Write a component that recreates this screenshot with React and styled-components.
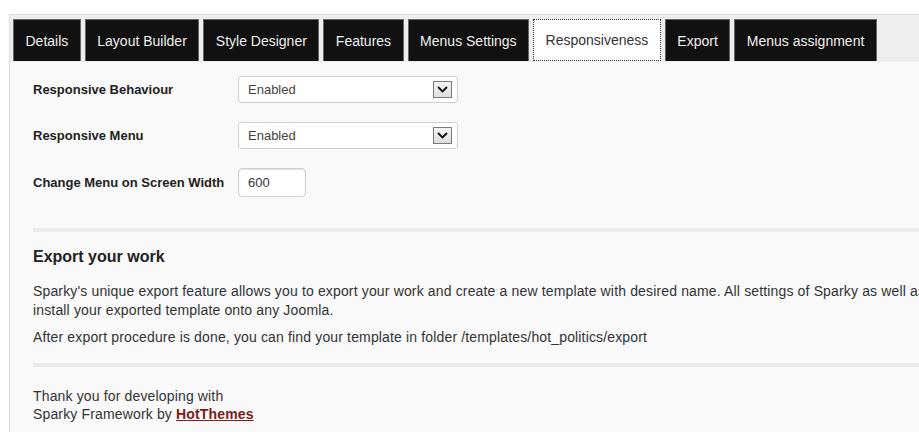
import styled, { createGlobalStyle } from "styled-components";

const GlobalStyle = createGlobalStyle`
  html, body {
    margin: 0;
    padding: 0;
    background: #fff;
    overflow: hidden;
  }
  body {
    font-family: "Liberation Sans", Arial, sans-serif;
  }
`;

const Page = styled.div`
  width: 919px;
  height: 432px;
  overflow: hidden;
  padding: 14px 0 0 9px;
  box-sizing: border-box;
`;

const Panel = styled.div`
  width: 1100px;
  height: 500px;
  border: 1px solid #dcdcdc;
  background: #f9f9f9;
`;

const TabBar = styled.div`
  display: flex;
  gap: 4px;
  padding: 4px 0 0 3px;
  background: #eeeeee;
  height: 47px;
  box-sizing: border-box;
`;

const Tab = styled.div`
  height: 42px;
  display: flex;
  align-items: center;
  padding: 0 11.5px;
  box-sizing: border-box;
  font-size: 14px;
  color: ${(p) => (p.$active ? "#333" : "#eee")};
  background: ${(p) => (p.$active ? "#fff" : "#111")};
  border: ${(p) => (p.$active ? "1px dotted #333" : "1px solid #666")};
  border-bottom: ${(p) => (p.$active ? "1px dotted #333" : "none")};
  white-space: nowrap;
  cursor: pointer;
`;

const Content = styled.div`
  padding: 14px 0 0 23px;
`;

const FormRow = styled.div`
  display: flex;
  align-items: center;
  margin-bottom: ${(p) => p.$gap || 19}px;
`;

const Label = styled.div`
  width: 205px;
  font-size: 13px;
  font-weight: bold;
  color: #222;
`;

const FakeSelect = styled.div`
  width: 220px;
  height: 27px;
  box-sizing: border-box;
  background: #fff;
  border: 1px solid #cfcfcf;
  border-radius: 3px;
  display: flex;
  align-items: center;
  justify-content: space-between;
  padding: 0 5px 0 9px;
  font-size: 13px;
  color: #444;
`;

const ArrowBox = styled.span`
  width: 19px;
  height: 17px;
  box-sizing: border-box;
  border: 1px solid #7a7a7a;
  background: linear-gradient(#f4f4f4, #dedede);
  display: flex;
  align-items: center;
  justify-content: center;
`;

const TextInput = styled.div`
  width: 68px;
  height: 29px;
  box-sizing: border-box;
  background: #fff;
  border: 1px solid #cfcfcf;
  border-radius: 4px;
  box-shadow: inset 0 1px 2px rgba(0, 0, 0, 0.12);
  display: flex;
  align-items: center;
  padding-left: 9px;
  font-size: 13px;
  color: #333;
`;

const Divider = styled.div`
  height: 4px;
  background: #ebebeb;
  margin: ${(p) => p.$margin};
`;

const Heading = styled.h3`
  margin: 0 0 15px;
  font-size: 16px;
  font-weight: bold;
  color: #222;
  line-height: 20px;
`;

const Para = styled.p`
  margin: 0 0 8px;
  font-size: 14px;
  line-height: 19px;
  letter-spacing: 0.15px;
  color: #333;
  white-space: nowrap;
`;

const Footer = styled.div`
  font-size: 14px;
  line-height: 18px;
  letter-spacing: 0.15px;
  color: #333;
`;

const BrandLink = styled.a`
  font-weight: bold;
  color: #7b1c16;
  text-decoration: underline;
`;

const tabs = [
  "Details",
  "Layout Builder",
  "Style Designer",
  "Features",
  "Menus Settings",
  "Responsiveness",
  "Export",
  "Menus assignment",
];

function Chevron() {
  return (
    <svg width="11" height="7" viewBox="0 0 11 7">
      <path d="M1 1 L5.5 5.5 L10 1" fill="none" stroke="#111" strokeWidth="1.8" />
    </svg>
  );
}

function Select({ value }) {
  return (
    <FakeSelect>
      {value}
      <ArrowBox>
        <Chevron />
      </ArrowBox>
    </FakeSelect>
  );
}

export default function App() {
  return (
    <Page>
      <GlobalStyle />
      <Panel>
        <TabBar>
          {tabs.map((t) => (
            <Tab key={t} $active={t === "Responsiveness"}>
              {t}
            </Tab>
          ))}
        </TabBar>
        <Content>
          <FormRow>
            <Label>Responsive Behaviour</Label>
            <Select value="Enabled" />
          </FormRow>
          <FormRow>
            <Label>Responsive Menu</Label>
            <Select value="Enabled" />
          </FormRow>
          <FormRow $gap={31}>
            <Label>Change Menu on Screen Width</Label>
            <TextInput>600</TextInput>
          </FormRow>
          <Divider $margin="0 0 15px" />
          <Heading>Export your work</Heading>
          <Para>
            Sparky's unique export feature allows you to export your work and create a new template with desired name. All settings of Sparky as well as
            <br />
            install your exported template onto any Joomla.
          </Para>
          <Para>
            After export procedure is done, you can find your template in folder /templates/hot_politics/export
          </Para>
          <Divider $margin="16px 0 20px" />
          <Footer>
            Thank you for developing with
            <br />
            Sparky Framework by <BrandLink href="#">HotThemes</BrandLink>
          </Footer>
        </Content>
      </Panel>
    </Page>
  );
}
